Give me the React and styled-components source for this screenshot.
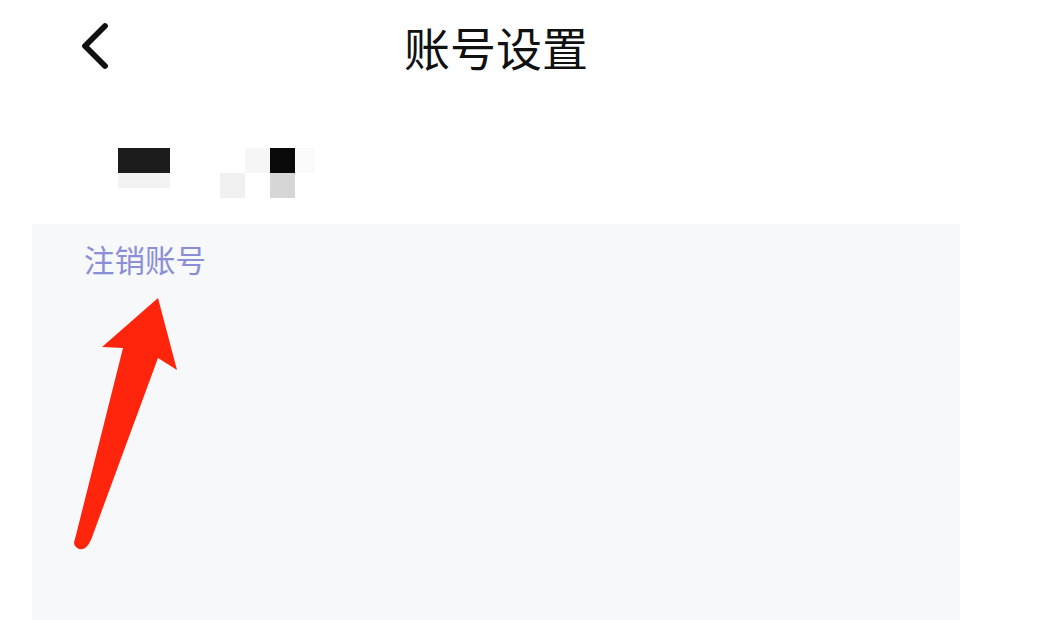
import React from 'react'
import styled, {createGlobalStyle} from "styled-components"

const GlobalStyle = createGlobalStyle`
html, body {
  margin: 0;
  padding: 0;
  background: #ffffff;
}
body {
  font-family: "Noto Sans CJK SC", "Noto Sans", sans-serif;
  overflow: hidden;
}
`

// pixelated (masked) nickname blocks
const mosaic = [
    {x: 0, y: 0, w: 52, h: 25, c: "#1c1c1c"},
    {x: 0, y: 25, w: 52, h: 15, c: "#f3f3f3"},
    {x: 102, y: 25, w: 25, h: 25, c: "#f0f0f0"},
    {x: 127, y: 0, w: 25, h: 25, c: "#f6f6f6"},
    {x: 152, y: 0, w: 25, h: 25, c: "#0a0a0a"},
    {x: 152, y: 25, w: 25, h: 25, c: "#d6d6d6"},
    {x: 177, y: 0, w: 20, h: 25, c: "#fbfbfb"},
]

const App = () => {
    return (
        <>
<GlobalStyle />
<Page>
<Header>
<BackButton aria-label="返回">
<svg width="32" height="48" viewBox="0 0 32 48">
<path d="M25 4 L5 24 L25 44" fill="none" stroke="#111" strokeWidth="5.8" strokeLinecap="round" strokeLinejoin="round" />
</svg>
</BackButton>
<Title>账号设置</Title>
<span />
</Header>
<NameRow>
<svg width="200" height="50" viewBox="0 0 200 50">
{mosaic.map((m, i) => <rect key={i} x={m.x} y={m.y} width={m.w} height={m.h} fill={m.c} />)}
</svg>
</NameRow>
<Panel>
<DangerLink>注销账号</DangerLink>
<Pointer width="130" height="270" viewBox="60 290 130 270">
<path d="M158 298 L177 370 L158 358 L91 540 Q86 551 79 549 Q72 546 75 539 L123 348 L102 347 Z" fill="#ff250d" />
</Pointer>
</Panel>
</Page>
        </>
    )
}

const Page = styled.div`
width: 992px;
`

const Header = styled.header`
display: grid;
grid-template-columns: 1fr auto 1fr;
align-items: center;
height: 92px;
`

const BackButton = styled.button`
justify-self: start;
display: flex;
align-items: center;
margin-left: 80px;
padding: 0;
border: none;
background: none;
cursor: pointer;
`

const Title = styled.h1`
margin: 0;
font-size: 46px;
font-weight: 400;
line-height: 1;
color: #111111;
letter-spacing: 0;
`

const NameRow = styled.div`
display: flex;
padding: 56px 0 0 118px;
height: 50px;
margin-bottom: 26px;
svg {display: block;}
`

const Panel = styled.section`
position: relative;
margin: 0 32px;
min-height: 396px;
background: #f6f8fa;
padding: 17px 0 0 52px;
box-sizing: border-box;
`

const DangerLink = styled.a`
display: inline-block;
font-size: 30.5px;
line-height: 36px;
color: #8b8ed6;
cursor: pointer;
`

const Pointer = styled.svg`
position: absolute;
left: 28px;
top: 66px;
`

export default App
